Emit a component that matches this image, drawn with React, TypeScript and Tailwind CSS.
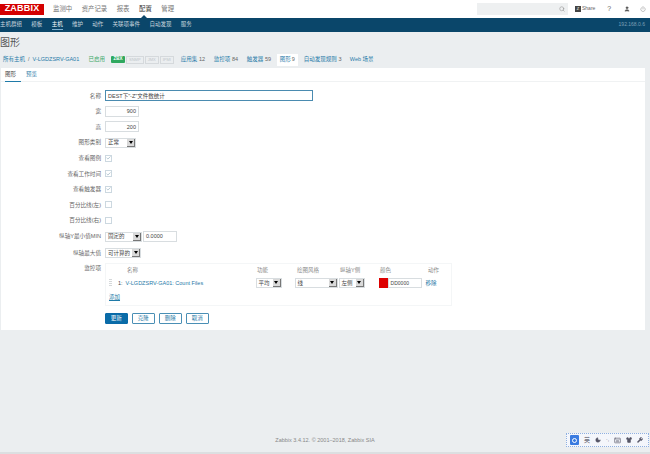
import { Search, User, Power, Check, Moon, Keyboard, Shirt, Wrench } from 'lucide-react'

const font = "font-['Liberation_Sans','Noto_Sans_CJK_SC',sans-serif]"

function Row({ label, children, h = 'h-[15.6px]' }: { label: string; children?: React.ReactNode; h?: string }) {
  return (
    <div className={`flex items-center ${h}`}>
      <div className="w-[100px] text-right text-[5.6px] text-[#666]">{label}</div>
      <div className="ml-1 flex items-center gap-px">{children}</div>
    </div>
  )
}

function Select({ value, w }: { value: string; w: string }) {
  return (
    <div className={`flex h-[10px] items-center justify-between border border-[#d8dde0] bg-white pl-[2px] text-[5.5px] text-[#444] ${w}`}>
      <span>{value}</span>
      <span className="flex h-full w-[8px] items-center justify-center border-r border-b border-[#777] bg-[#d9d9d9]">
        <span className="h-0 w-0 border-x-[2px] border-t-[3px] border-x-transparent border-t-black" />
      </span>
    </div>
  )
}

function Box({ checked }: { checked?: boolean }) {
  return (
    <div className="flex h-[7px] w-[7px] items-center justify-center border border-[#ccd8e0] bg-white">
      {checked && <Check className="h-[6px] w-[6px] text-[#8aa6b8]" strokeWidth={3} />}
    </div>
  )
}

function Btn({ children, primary }: { children: string; primary?: boolean }) {
  return (
    <div
      className={`flex h-[11px] w-[22.5px] items-center justify-center rounded-[1px] border text-[5.5px] ${
        primary ? 'border-[#0a6aa8] bg-[#0a6ca8] text-white' : 'border-[#4a8fb5] bg-white text-[#1f7aa8]'
      }`}
    >
      {children}
    </div>
  )
}

export default function App() {
  return (
    <div className={`flex h-[454px] w-[650px] flex-col overflow-hidden bg-[#ebeef0] ${font}`}>
      <header className="flex h-[18px] items-center bg-white">
        <div className="flex h-[11px] w-[44px] items-center justify-center bg-[#d40000] text-[9px] font-bold tracking-[0.2px] text-white">
          ZABBIX
        </div>
        <nav className="ml-[9px] flex gap-[9.5px] text-[6.4px] text-[#777]">
          <span>监测中</span>
          <span>资产记录</span>
          <span>报表</span>
          <span className="text-[#333]">配置</span>
          <span>管理</span>
        </nav>
        <div className="ml-auto flex h-[12px] w-[91px] items-center justify-end bg-[#eef0f1] pr-[3px]">
          <Search className="h-[6px] w-[6px] text-[#888]" />
        </div>
        <div className="ml-[7px] flex w-[75px] items-center text-[5px] text-[#666]">
          <span className="mr-px flex h-[6px] w-[6px] items-center justify-center bg-[#444] text-[4px] text-white">Z</span>
          <span>Share</span>
          <span className="ml-[12px] text-[7px]">?</span>
          <User className="ml-[13px] h-[6px] w-[6px] fill-[#555] text-[#555]" />
          <Power className="ml-[10px] h-[6px] w-[6px] text-[#888]" />
        </div>
      </header>

      <div className="relative flex h-[14px] items-center bg-[#0a466a] text-[5.5px] text-[#c9d6df]">
        <div className="absolute left-[141px] top-[-3px] h-0 w-0 border-x-[3px] border-b-[3px] border-x-transparent border-b-[#0a466a]" />
        <nav className="flex gap-[9.3px]">
          <span>主机群组</span>
          <span>模板</span>
          <span className="border-b border-[#7fb0d0] text-white">主机</span>
          <span>维护</span>
          <span>动作</span>
          <span>关联项事件</span>
          <span>自动发现</span>
          <span>服务</span>
        </nav>
        <span className="ml-auto pr-[5px] text-[5px] text-[#7d9fb5]">192.168.0.6</span>
      </div>

      <h1 className="mt-[3px] text-[10px] leading-[16px] text-[#555]">图形</h1>

      <div className="flex h-[17px] items-center pl-[3px] text-[5.5px] text-[#1f7aa8]">
        <span>所有主机</span>
        <span className="mx-[3px] text-[#666]">/</span>
        <span className="w-[48px]">V-LGDZSRV-GA01</span>
        <span className="ml-[8px] text-[#3aa866]">已启用</span>
        <span className="ml-[6px] flex h-[7px] w-[14px] items-center justify-center rounded-[1px] bg-[#2fa85f] text-[4.5px] font-bold text-white">ZBX</span>
        <span className="ml-px border border-[#d5d9dc] px-[2px] text-[4px] text-[#c0c5c9]">SNMP</span>
        <span className="ml-px border border-[#d5d9dc] px-[2px] text-[4px] text-[#c0c5c9]">JMX</span>
        <span className="ml-px border border-[#d5d9dc] px-[2px] text-[4px] text-[#c0c5c9]">IPMI</span>
        <span className="ml-[7px] w-[33px] shrink-0">应用集 <span className="text-[#666]">12</span></span>
        <span className="w-[33px] shrink-0">监控项 <span className="text-[#666]">84</span></span>
        <span className="w-[30px] shrink-0">触发器 <span className="text-[#666]">59</span></span>
        <span className="flex h-[12px] w-[21px] shrink-0 items-center justify-center bg-white">图形 <span className="ml-px text-[#666]">9</span></span>
        <span className="ml-[6px] w-[46px] shrink-0">自动发现规则 <span className="text-[#666]">3</span></span>
        <span>Web 场景</span>
      </div>

      <main className="ml-px mr-[5px] h-[262px] bg-white">
        <div className="flex h-[14px] border-b border-[#f0f2f3] pl-[4px] text-[5.5px]">
          <span className="flex h-[14px] items-center border-b border-[#1f7aa8] pr-[5px] text-[#444]">图形</span>
          <span className="ml-[5px] flex items-center text-[#1f7aa8]">预览</span>
        </div>

        <div className="pt-[6px]">
          <Row label="名称">
            <div className="flex h-[11px] w-[208px] items-center border border-[#4a8bb0] pl-[2px] text-[5.5px] text-[#444]">
              DEST下&quot;-Z&quot;文件数统计
            </div>
          </Row>
          <Row label="宽">
            <div className="flex h-[11px] w-[34px] items-center justify-end border border-[#d8dde0] pr-[2px] text-[5.5px] text-[#444]">900</div>
          </Row>
          <Row label="高">
            <div className="flex h-[11px] w-[34px] items-center justify-end border border-[#d8dde0] pr-[2px] text-[5.5px] text-[#444]">200</div>
          </Row>
          <Row label="图形类别"><Select value="正常" w="w-[31px]" /></Row>
          <Row label="查看图例"><Box checked /></Row>
          <Row label="查看工作时间"><Box checked /></Row>
          <Row label="查看触发器"><Box checked /></Row>
          <Row label="百分比线(左)"><Box /></Row>
          <Row label="百分比线(右)"><Box /></Row>
          <Row label="纵轴Y最小值MIN" h="h-[16.5px]">
            <Select value="固定的" w="w-[37px]" />
            <div className="flex h-[11px] w-[34px] items-center border border-[#d8dde0] pl-[2px] text-[5.5px] text-[#444]">0.0000</div>
          </Row>
          <Row label="纵轴最大值" h="h-[16px]"><Select value="可计算的" w="w-[36px]" /></Row>

          <div className="flex pt-[2px]">
            <div className="w-[100px] pt-[1px] text-right text-[5.6px] text-[#666]">监控项</div>
            <div className="ml-1 h-[43px] w-[347px] border border-[#f4f6f7] text-[5.5px] text-[#888]">
              <div className="relative h-[13px]">
                <span className="absolute left-[21px] top-[2px]">名称</span>
                <span className="absolute left-[151px] top-[2px]">功能</span>
                <span className="absolute left-[191px] top-[2px]">绘图风格</span>
                <span className="absolute left-[234px] top-[2px]">纵轴Y侧</span>
                <span className="absolute left-[274px] top-[2px]">颜色</span>
                <span className="absolute left-[322px] top-[2px]">动作</span>
              </div>
              <div className="flex h-[13px] items-center text-[#444]">
                <span className="ml-[3px] h-[8px] w-[3px] bg-[repeating-linear-gradient(#d5d8da_0,#d5d8da_1px,#fff_1px,#fff_2px)]" />
                <span className="ml-[6px]">1:</span>
                <span className="ml-[3px] w-[130px] text-[#1f7aa8]">V-LGDZSRV-GA01: Count Files</span>
                <Select value="平均" w="w-[26px]" />
                <div className="ml-[13px]"><Select value="线" w="w-[43px]" /></div>
                <div className="ml-px"><Select value="左侧" w="w-[26px]" /></div>
                <span className="ml-[14px] h-[10px] w-[9px] bg-[#dd0000]" />
                <div className="flex h-[10px] w-[34px] items-center border border-[#d8dde0] pl-[2px] text-[5px]">DD0000</div>
                <span className="ml-[4px] text-[#1f7aa8]">移除</span>
              </div>
              <div className="mt-[3px] pl-[3px] text-[#1f7aa8] underline">添加</div>
            </div>
          </div>

          <div className="ml-[104px] mt-[7px] flex gap-[4.5px]">
            <Btn primary>更新</Btn>
            <Btn>克隆</Btn>
            <Btn>删除</Btn>
            <Btn>取消</Btn>
          </div>
        </div>
      </main>

      <div className="relative flex-1 border-b-2 border-[#dcdfe1]">
        <div className="absolute left-0 right-0 top-[106px] text-center text-[5.5px] text-[#888]">Zabbix 3.4.12. © 2001–2018, Zabbix SIA</div>
        <div className="absolute bottom-[5px] right-px flex h-[14px] w-[83px] items-center gap-[5px] border border-dotted border-[#8fb0e0] bg-[#f4f6fb] pl-[3px] text-[#556]">
          <span className="flex h-[10px] w-[9px] items-center justify-center rounded-[1px] bg-[#3a7be0]">
            <span className="h-[5px] w-[5px] rounded-full border border-white" />
          </span>
          <span className="text-[6px]">英</span>
          <Moon className="h-[6px] w-[6px] fill-[#556]" />
          <span className="text-[5px]">·,</span>
          <Keyboard className="h-[7px] w-[7px]" />
          <Shirt className="h-[6px] w-[6px] fill-[#556]" />
          <Wrench className="h-[6px] w-[6px] fill-[#556]" />
        </div>
      </div>
    </div>
  )
}
